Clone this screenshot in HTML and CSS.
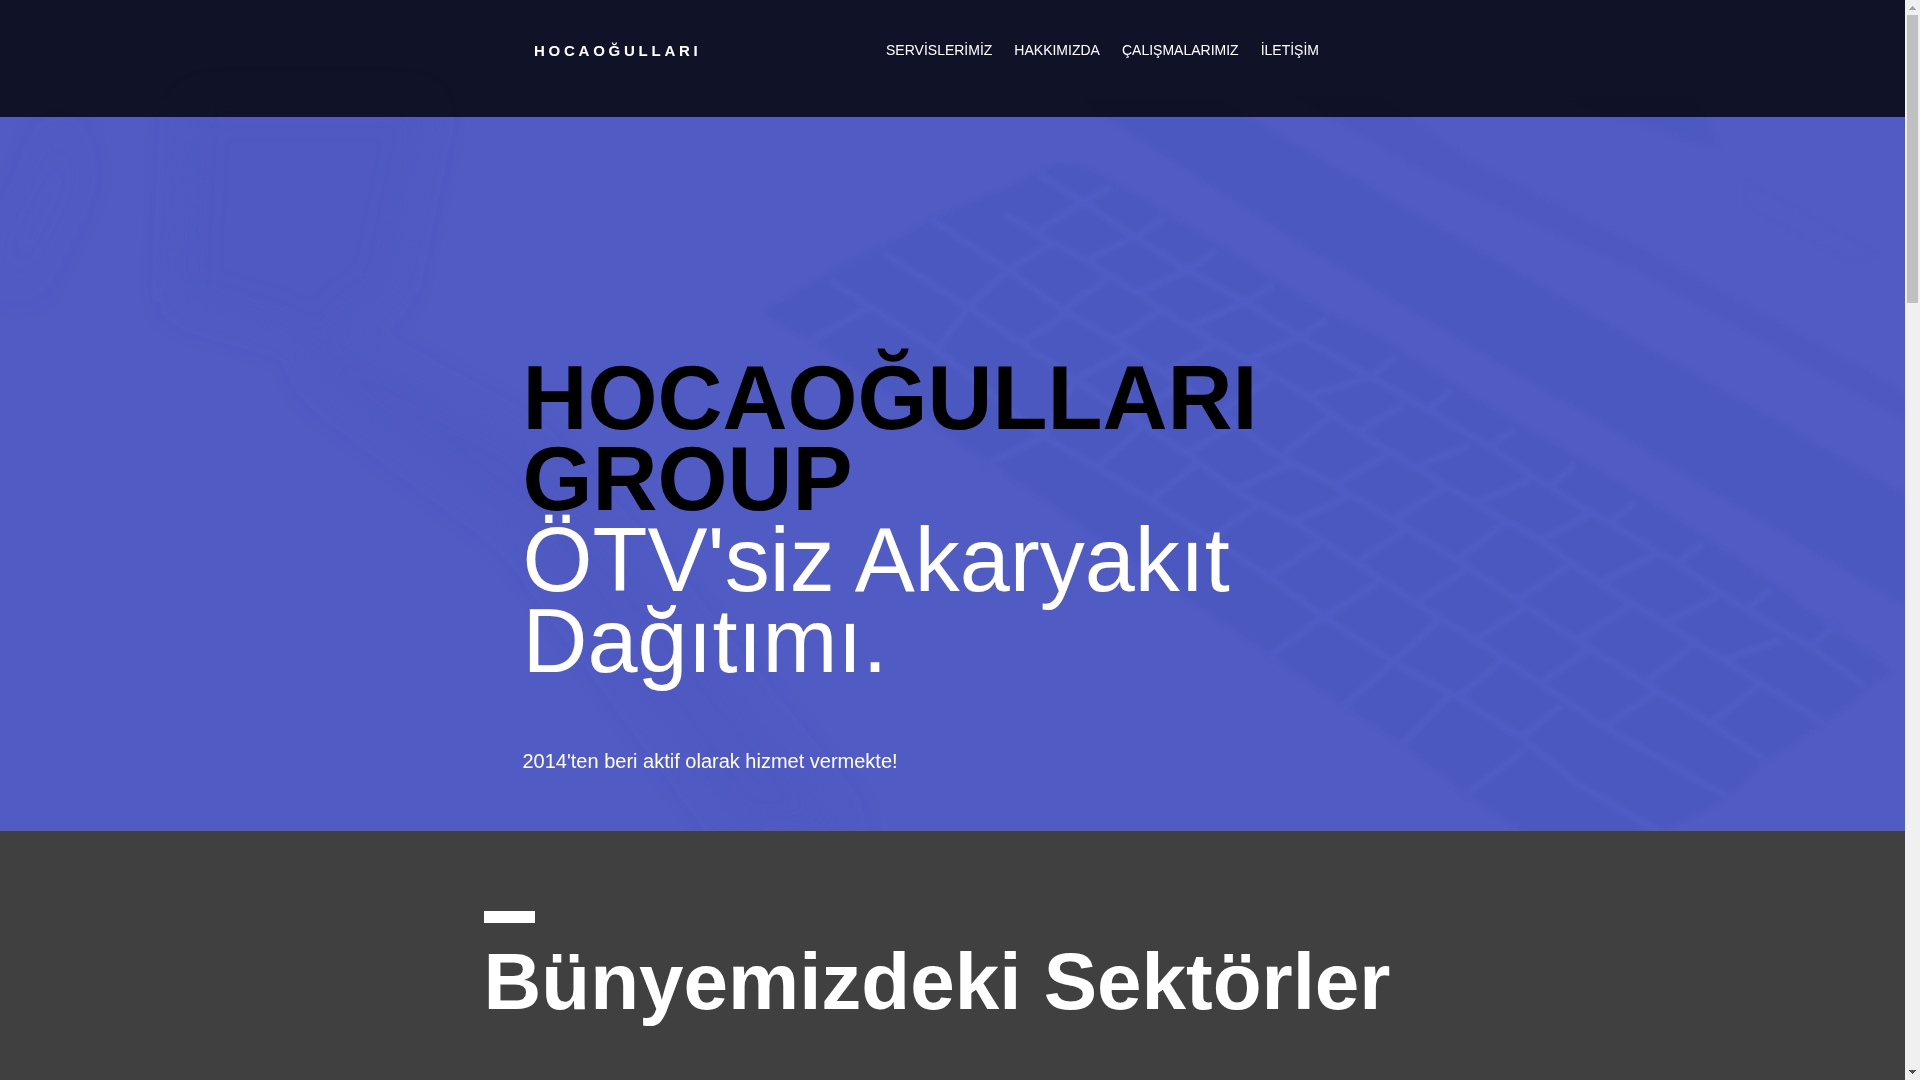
FILE: index.html
```html
<!DOCTYPE html>
<html lang="tr">
<head>
  <meta charset="utf-8">
  <meta name="viewport" content="width=device-width, initial-scale=1">
  <title>Hocaoğulları Group</title>
  <link rel="stylesheet" href="styles.css">
</head>
<body>
  <div class="page">
    <div class="hero">
      <svg class="hero-art" viewBox="0 0 1905 831" preserveAspectRatio="xMidYMid slice" aria-hidden="true">
        <defs>
          <filter id="soft" x="0" y="0" width="100%" height="100%"><feGaussianBlur stdDeviation="2"/></filter>
          <filter id="haze" x="-20%" y="-20%" width="140%" height="140%"><feGaussianBlur stdDeviation="18"/></filter>
        </defs>
        <!-- desk shadows -->
        <g filter="url(#haze)" fill="#4d58bf">
          <path d="M190 100H430L390 290L320 340L180 300Z" opacity=".5"/>
          <path d="M300 320L520 440L640 570L850 831H740L520 530L320 380Z" opacity=".5"/>
          <path d="M60 117L75 180L20 290L0 260L40 180Z" opacity=".3"/>
        </g>
        <!-- laptop edges -->
        <g filter="url(#soft)" fill="#4c58c0">
          <path d="M1080 100L1220 100L1300 147L1553 293L1885 483L1915 500V612L1695 480L1300 243Z"/>
          <path d="M1290 95H1380L1470 160L1656 255L1910 395V424L1640 272L1440 180Z" opacity=".8"/>
          <path d="M1560 100H1700L1720 150Z" opacity=".5"/>
          <path d="M1745 180L1880 255L1850 262L1745 205Z" opacity=".3"/>
        </g>
        <!-- keyboard -->
        <g filter="url(#soft)">
          <path class="keys" d="M762 313L829 274L883 247L932 220L1003 190L1060 163L1095 172L1160 210L1270 278L1325 312L1380 338L1440 376L1500 414L1560 448L1630 490L1700 535L1770 582L1830 628L1892 670L1870 685L1824 723L1765 760L1728 797L1664 830L1640 840H1530L1521 830L1462 790L1402 743L1338 700L1264 650L977 453L812 340Z"/>
          <g class="gaps">
            <path d="M1039 175L1084 202L1135 237L1187 270L1245 302L1300 337L1371 377L1428 410L1490 447L1549 487L1609 523L1677 563L1746 610L1811 647L1866 687"/>
            <path d="M1003 213L1053 243L1086 260L1137 293L1189 327L1247 360L1303 393L1357 432L1415 467L1475 503L1540 540L1599 583L1664 623L1723 660L1824 723"/>
            <path d="M932 220L1008 270L1062 310L1115 340L1164 373L1220 413L1280 457L1335 485L1393 520L1457 560L1517 600L1576 640L1645 683L1710 723L1765 760"/>
            <path d="M883 253L968 307L1021 343L1075 380L1129 417L1187 453L1234 490L1294 522L1356 563L1416 603L1475 640L1540 683L1604 727L1728 797"/>
            <path d="M829 280L937 350L1044 437L1097 467L1150 500L1210 538L1269 577L1324 617L1393 662L1457 697L1521 737L1576 783L1664 835"/>
            <path d="M1084 202L1112 186M1135 237L1165 218M1187 270L1216 252M1245 302L1274 284M1300 337L1328 318M1371 377L1397 355M1428 410L1452 390M1490 447L1515 428M1549 487L1575 464M1609 523L1636 503M1677 563L1704 543M1746 610L1772 588M1811 647L1836 625"/>
            <path d="M1084 202L1036 232M1135 237L1086 260M1187 270L1137 293M1245 302L1189 327M1300 337L1247 360M1371 377L1303 397M1403 405L1357 432M1470 445L1415 467M1530 480L1475 503M1593 513L1540 540M1655 555L1599 583M1718 596L1664 623M1782 640L1723 660"/>
            <path d="M1053 243L1008 270M1110 277L1062 310M1162 310L1115 340M1216 343L1164 373M1275 375L1220 413M1330 417L1280 457M1390 453L1335 485M1445 487L1393 520M1505 523L1457 560M1572 563L1517 600M1632 605L1576 640M1700 640L1645 683M1760 685L1710 723"/>
            <path d="M1008 270L968 307M1070 312L1021 343M1128 350L1075 380M1180 385L1129 417M1235 425L1187 453M1295 462L1234 490M1350 495L1294 522M1405 530L1356 563M1465 570L1416 603M1525 607L1475 640M1588 650L1540 683M1657 692L1604 727"/>
            <path d="M968 307L937 350M1075 380L1044 437M1145 425L1097 467M1200 462L1150 500M1258 505L1210 538M1320 543L1269 577M1378 583L1324 617M1440 620L1393 662M1503 660L1457 697M1562 705L1521 737"/>
            <path d="M870 307L812 340M1044 437L985 465M1324 617L1268 657M1393 662L1345 705M1450 695L1402 745M1525 750L1465 795"/>
          </g>
        </g>
      </svg>
      <header class="site-header">
        <div class="header-inner">
          <a class="logo" href="#">HOCAOĞULLARI</a>
          <nav class="nav" aria-label="Ana menü">
            <a href="#servisler">SERVİSLERİMİZ</a>
            <a href="#hakkimizda">HAKKIMIZDA</a>
            <a href="#calismalar">ÇALIŞMALARIMIZ</a>
            <a href="#iletisim">İLETİŞİM</a>
          </nav>
        </div>
      </header>
      <div class="hero-copy">
        <h1 class="hero-title"><strong class="brand">HOCAOĞULLARI GROUP</strong><br>ÖTV'siz Akaryakıt Dağıtımı.</h1>
        <p class="hero-text">2014'ten beri aktif olarak hizmet vermekte!</p>
      </div>
    </div>
    <section class="sectors" id="servisler">
      <div class="sectors-inner">
        <div class="accent"></div>
        <h2 class="sectors-title">Bünyemizdeki Sektörler</h2>
      </div>
    </section>
  </div>
  <div class="scrollbar" aria-hidden="true">
    <svg class="arrow arrow-up" viewBox="0 0 7 4"><path d="M3 0h1v1h1v1h1v1h1v1H0V3h1V2h1V1h1z"/></svg>
    <div class="thumb"></div>
    <svg class="arrow arrow-down" viewBox="0 0 7 4"><path d="M0 0h7v1H6v1H5v1H4v1H3V3H2V2H1V1H0z"/></svg>
  </div>
</body>
</html>
```
FILE: styles.css
```css
* {
  box-sizing: border-box;
}

body {
  margin: 0;
  height: 100vh;
  overflow: hidden;
  display: grid;
  grid-template-columns: 1fr 15px;
  font-family: "Liberation Sans", Arial, sans-serif;
  color: #fff;
  background: #404040;
}

a {
  color: inherit;
  text-decoration: none;
}

.page {
  min-width: 0;
  height: 100vh;
  overflow: hidden;
}

.hero {
  position: relative;
  background: #505bc4;
}

.hero-art {
  position: absolute;
  inset: 0;
  width: 100%;
  height: 100%;
}

.keys {
  fill: #4b58c0;
}

.gaps {
  fill: none;
  stroke: #505cc5;
  stroke-width: 8;
  stroke-linejoin: round;
}

.site-header {
  position: relative;
  background: rgba(0, 0, 0, 0.8);
}

.header-inner {
  max-width: 837px;
  margin: 0 auto;
  padding: 40px 52px 55px 0;
  display: flex;
  justify-content: space-between;
  align-items: flex-start;
}

.logo {
  font-size: 15px;
  line-height: 22px;
  font-weight: bold;
  letter-spacing: 0.25em;
}

.nav {
  display: flex;
  gap: 22px;
  font-size: 14px;
  line-height: 20px;
}

.hero-copy {
  position: relative;
  max-width: 860px;
  margin: 0 auto;
  padding: 241px 0 58px;
}

.hero-title {
  margin: 0 0 67px;
  font-size: 90px;
  line-height: 81px;
  font-weight: normal;
}

.brand {
  color: #000;
}

.hero-text {
  margin: 0;
  font-size: 20px;
  line-height: 24px;
}

.sectors-inner {
  max-width: 938px;
  margin: 0 auto;
  padding: 80px 0;
}

.accent {
  width: 51px;
  height: 12px;
  background: #fff;
}

.sectors-title {
  margin: 19px 0 0;
  font-size: 80px;
  line-height: 80px;
}

.scrollbar {
  height: 100vh;
  padding: 6px 2px;
  display: flex;
  flex-direction: column;
  align-items: center;
  background: #f0f0f0;
}

.thumb {
  width: 11px;
  height: 27%;
  margin-top: 5px;
  background: #c0c0c0;
}

.arrow {
  width: 7px;
  height: 4px;
  flex: none;
  fill: #505050;
}

.arrow-up {
  fill: #a3a3a3;
}

.arrow-down {
  margin-top: auto;
}
```
